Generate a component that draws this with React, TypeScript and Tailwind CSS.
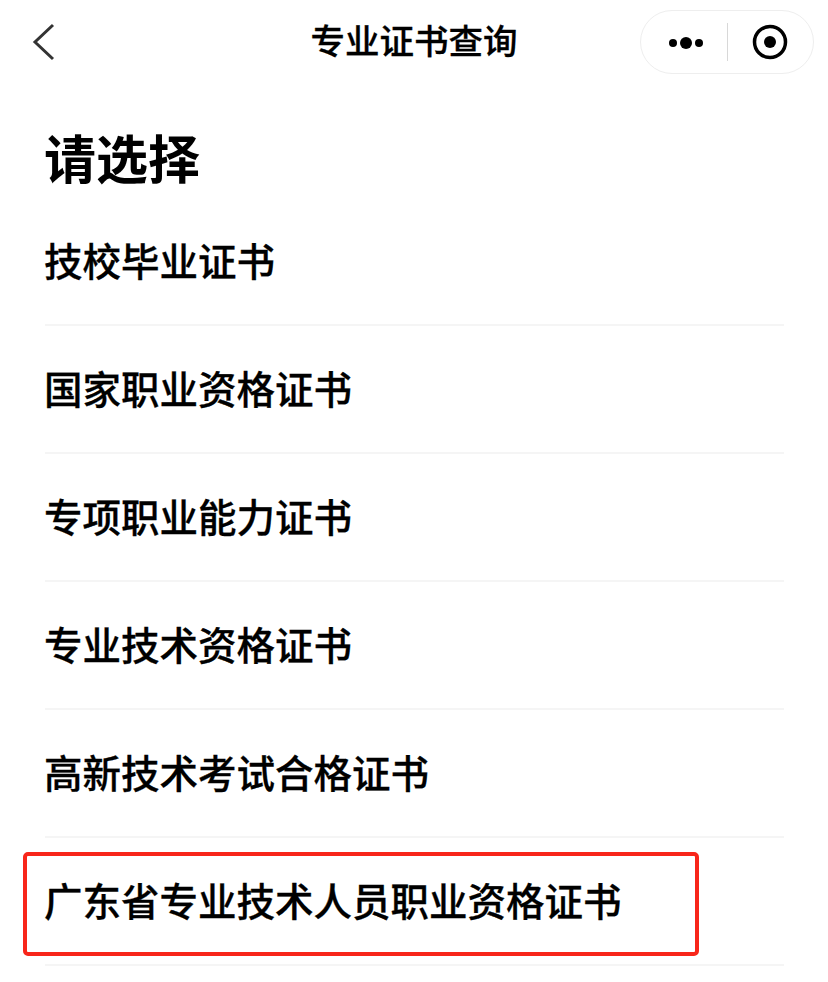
const items = [
  '技校毕业证书',
  '国家职业资格证书',
  '专项职业能力证书',
  '专业技术资格证书',
  '高新技术考试合格证书',
]

function Row({ label }: { label: string }) {
  return (
    <div className="h-[128px] flex items-center pb-[2px] border-b-2 border-[#f5f5f5] font-medium [-webkit-text-stroke:0.3px_#000] text-[38.5px] text-black">
      <span className="-ml-px">{label}</span>
    </div>
  )
}

export default function App() {
  return (
    <div className="w-[828px] h-[982px] overflow-hidden bg-white font-['Noto_Sans_CJK_SC','Liberation_Sans',sans-serif]">
      <div className="h-[84px] flex items-center relative">
        <svg className="ml-[30px]" width="28" height="40" viewBox="0 0 28 40" fill="none">
          <path d="M23 3 L5 20 L23 37" stroke="#333" strokeWidth="3" />
        </svg>
        <div className="absolute left-0 right-0 top-[14px] text-center text-[34.5px] leading-[50px] font-medium [-webkit-text-stroke:0.3px_#000] text-black">专业证书查询</div>
        <div className="absolute left-[640px] top-[10px] w-[174px] h-[64px] rounded-full border border-[#eeeeee] flex items-center">
          <div className="w-[86px] flex justify-center items-center gap-[3px] pl-[4px] pt-[1px]">
            <span className="w-[8px] h-[8px] rounded-full bg-black" />
            <span className="w-[12px] h-[12px] rounded-full bg-black" />
            <span className="w-[8px] h-[8px] rounded-full bg-black" />
          </div>
          <div className="w-px h-[38px] bg-[#d8d8d8]" />
          <div className="flex-1 flex justify-center pr-[2px]">
            <svg width="36" height="36" viewBox="0 0 36 36">
              <circle cx="18" cy="18" r="15.5" fill="none" stroke="#000" strokeWidth="3.5" />
              <circle cx="18" cy="18" r="6" fill="#000" />
            </svg>
          </div>
        </div>
      </div>

      <div className="pl-[45px] pr-[44px]">
        <h1 className="text-[52px] font-bold text-black leading-none pt-[47px] pb-[15px] -ml-px">请选择</h1>
        {items.map((label) => (
          <Row key={label} label={label} />
        ))}
        <div className="relative">
          <Row label="广东省专业技术人员职业资格证书" />
          <div className="absolute left-[-22px] top-[14px] w-[676px] h-[104px] border-[4px] border-[#f8261a] rounded-[5px]" />
        </div>
      </div>
    </div>
  )
}
